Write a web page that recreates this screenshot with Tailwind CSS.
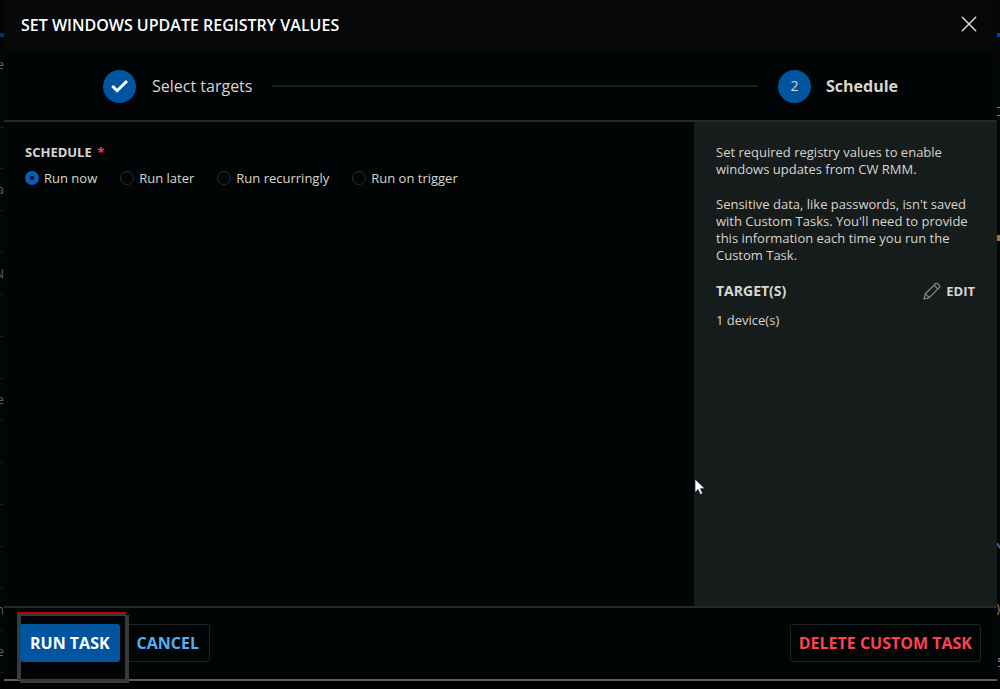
<!DOCTYPE html>
<html lang="en">
<head>
<meta charset="utf-8">
<meta name="viewport" content="width=device-width, initial-scale=1">
<title>Set Windows Update Registry Values</title>
<script src="https://cdn.jsdelivr.net/npm/@tailwindcss/browser@4"></script>
</head>
<body class="flex h-screen flex-col overflow-hidden bg-black font-['Open_Sans',sans-serif] text-[13px] text-[#d9d5cf]">
<div class="flex min-h-0 flex-1">

  <!-- Edge of the page behind the dialog -->
  <div aria-hidden="true" class="flex w-1 shrink-0 flex-col overflow-hidden bg-[#040506] text-[13px] text-[#62605c]">
    <div class="h-[33px]"></div>
    <div class="h-1 bg-[#00326b]"></div>
    <div class="flex h-[90px] justify-end pt-[18px]">e</div>
    <div class="h-[42px] shrink-0 border-y border-[#17191a]"></div>
    <div class="flex h-[42px] shrink-0 items-center justify-end border-b border-[#17191a]">a</div>
    <div class="h-[42px] shrink-0 border-b border-[#17191a]"></div>
    <div class="flex h-[42px] shrink-0 items-center justify-end border-b border-[#17191a]">N</div>
    <div class="h-[42px] shrink-0 border-b border-[#17191a]"></div>
    <div class="h-[42px] shrink-0 border-b border-[#17191a]"></div>
    <div class="flex h-[42px] shrink-0 items-center justify-end border-b border-[#17191a]">e</div>
    <div class="h-[42px] shrink-0 border-b border-[#17191a]"></div>
    <div class="h-[42px] shrink-0 border-b border-[#17191a]"></div>
    <div class="h-[42px] shrink-0 border-b border-[#17191a]"></div>
    <div class="h-[42px] shrink-0 border-b border-[#17191a]"></div>
    <div class="flex h-[42px] shrink-0 items-center justify-end border-b border-[#17191a]">n</div>
    <div class="flex h-[42px] shrink-0 items-center justify-end border-b border-[#17191a]">e</div>
  </div>

  <main role="dialog" aria-labelledby="title" class="flex min-w-0 flex-1 flex-col border-b-2 border-[#5c5e60] bg-[#020506]">
    <header class="flex h-[52px] shrink-0 items-center justify-between bg-[#060708] pr-5 pb-1 pl-[17px]">
      <h1 id="title" class="pt-0.5 text-base font-semibold text-white">SET WINDOWS UPDATE REGISTRY VALUES</h1>
      <button type="button" aria-label="Close">
        <svg class="size-4" viewBox="0 0 16 16" fill="none" stroke="#e6e2dc" stroke-width="1.4" stroke-linecap="round"><path d="M1.3 1.3l13.4 13.4M14.7 1.3L1.3 14.7"/></svg>
      </button>
    </header>

    <ol class="flex h-[70px] shrink-0 items-center border-b-2 border-[#25292c] px-[99px] text-base">
      <li class="flex items-center gap-4">
        <span class="flex size-[33px] items-center justify-center rounded-full bg-[#01559f]">
          <svg class="size-5" viewBox="0 0 20 20" fill="none" stroke="#fff" stroke-width="3"><path d="M2.300 10l4.800 4.700L17 5"/></svg>
        </span>
        <span>Select targets</span>
      </li>
      <li aria-hidden="true" class="mx-5 h-0.5 flex-1 bg-[#181c1d]"></li>
      <li aria-current="step" class="flex items-center gap-[15px]">
        <span class="flex size-[33px] items-center justify-center rounded-full bg-[#01559f] text-sm">2</span>
        <span class="font-bold">Schedule</span>
      </li>
    </ol>

    <div class="flex min-h-0 flex-1">
      <form class="min-w-0 flex-1 px-[21px] pt-5">
        <fieldset>
          <legend class="text-[13px] leading-5 font-bold">SCHEDULE <span class="ml-0.5 text-[#f23d4f]">*</span></legend>
          <div class="flex gap-[23px] pt-1.5 leading-5">
            <label class="flex items-center gap-[5px]"><input type="radio" name="schedule" checked class="size-3.5 appearance-none rounded-full border border-[#2b2f31] checked:border-[5px] checked:border-[#0560b3]">Run now</label>
            <label class="flex items-center gap-[5px]"><input type="radio" name="schedule" class="size-3.5 appearance-none rounded-full border border-[#2b2f31] checked:border-[5px] checked:border-[#0560b3]">Run later</label>
            <label class="flex items-center gap-[5px]"><input type="radio" name="schedule" class="size-3.5 appearance-none rounded-full border border-[#2b2f31] checked:border-[5px] checked:border-[#0560b3]">Run recurringly</label>
            <label class="flex items-center gap-[5px]"><input type="radio" name="schedule" class="size-3.5 appearance-none rounded-full border border-[#2b2f31] checked:border-[5px] checked:border-[#0560b3]">Run on trigger</label>
          </div>
        </fieldset>
      </form>

      <aside class="w-[303px] shrink-0 bg-[#161b1b] px-[22px] pt-[22px] leading-[17px]">
        <p>Set required registry values to enable windows updates from CW RMM.</p>
        <p class="mt-[18px]">Sensitive data, like passwords, isn't saved with Custom Tasks. You'll need to provide this information each time you run the Custom Task.</p>
        <div class="mt-[17px] flex items-center justify-between">
          <h2 class="text-sm leading-5 font-bold">TARGET(S)</h2>
          <button type="button" class="flex items-center gap-[5px] text-[13px] leading-5 font-bold">
            <svg class="size-[18px]" viewBox="0 0 18 18" fill="none" stroke="#8d8780" stroke-width="1.2" stroke-linejoin="round"><path d="M1 17l1.200-5L12.700 1.500q.8-.8 1.600 0l2.200 2.200q.8.8 0 1.600L6 15.800zM2.200 12q1.800 0 1.900 1.900q1.900.1 1.900 1.900M11 3.200l3.800 3.800"/></svg>
            EDIT
          </button>
        </div>
        <p class="mt-[11px]">1 device(s)</p>
      </aside>
    </div>

    <footer class="flex h-[73px] shrink-0 items-center gap-1.5 border-t-2 border-[#25292c] px-4 pb-px text-base font-bold">
      <div class="relative">
        <div aria-hidden="true" class="absolute top-[-12px] left-[-3px] h-[68px] w-[109px] border border-[#c00008] shadow-[3px_3px_0_#3a3a3a,inset_3px_3px_0_#3a3a3a]"></div>
        <button type="button" class="relative h-[38px] rounded-[3px] bg-[#01559f] px-2.5 text-white">RUN TASK</button>
      </div>
      <button type="button" class="h-[38px] rounded-[3px] border border-[#202426] px-2.5 text-[#54aef5]">CANCEL</button>
      <button type="button" class="ml-auto h-[38px] rounded-[3px] border border-[#202426] px-2 text-[#fd4153]">DELETE CUSTOM TASK</button>
    </footer>
  </main>

  <!-- Opposite edge of the page behind the dialog -->
  <div aria-hidden="true" class="flex w-[3px] shrink-0 flex-col overflow-hidden bg-[#040506] text-[13px] text-[#85827d]">
    <div class="h-[33px] shrink-0"></div>
    <div class="h-1 shrink-0 bg-[#004593]"></div>
    <div class="mt-[70px] h-[9px] shrink-0 border-y border-[#77756f]"></div>
    <div class="mt-[119px] h-1.5 shrink-0 bg-[#a2713b]"></div>
    <svg class="mt-[302px] h-1.5 w-[3px] shrink-0" viewBox="0 0 3 6" stroke="#555a98" stroke-width="2"><path d="M0 0l3 5"/></svg>
    <div class="mt-[50px] flex h-5 shrink-0 items-center justify-end">)</div>
    <div class="mt-[33px] h-5 shrink-0 leading-5">5</div>
  </div>
</div>
<div class="h-2 shrink-0"></div>

<!-- Mouse pointer -->
<svg aria-hidden="true" class="absolute top-[478px] left-[694px] h-[18px] w-3" viewBox="0 0 12 18"><path d="M1 1v13.500l3.100-3 2.200 5 2.300-1-2.100-4.800H11z" fill="#fff" stroke="#10131f" stroke-width=".7"/></svg>
</body>
</html>
